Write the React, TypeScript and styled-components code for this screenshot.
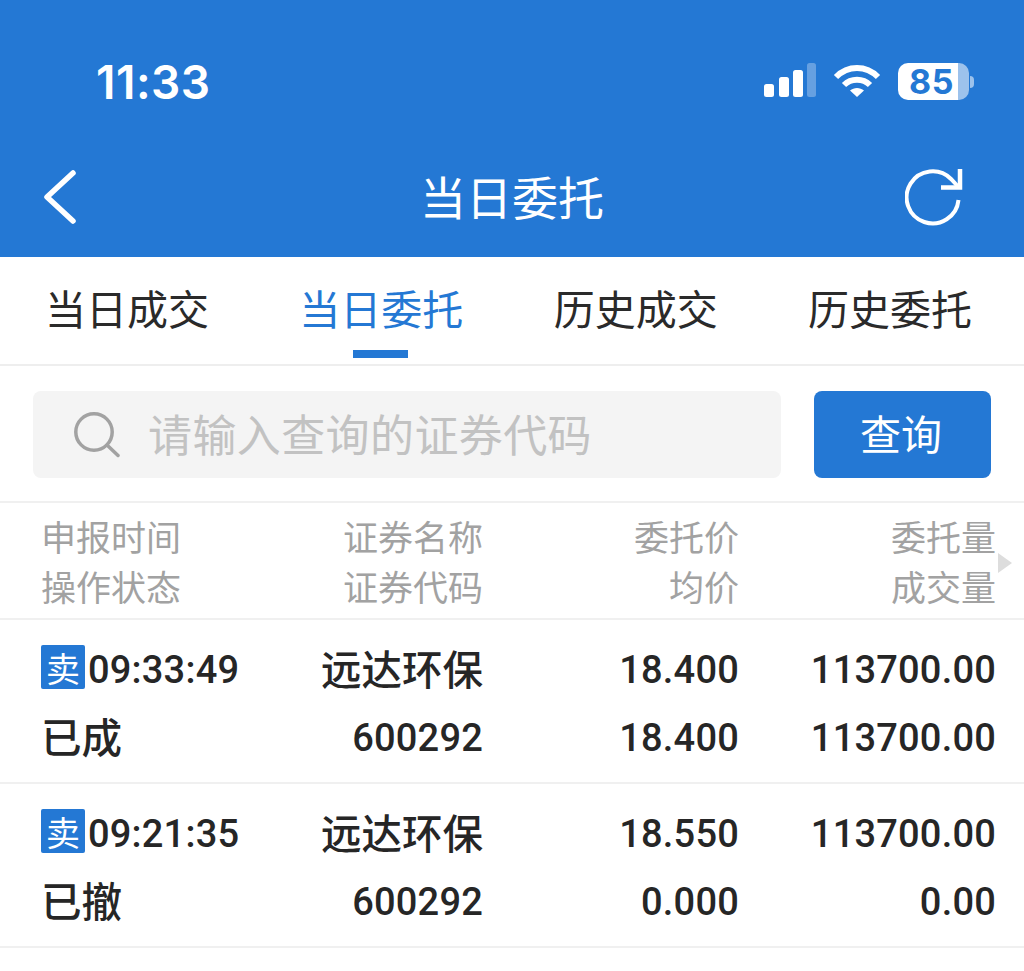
import React from "react";
import styled, { createGlobalStyle } from "styled-components";

const Global = createGlobalStyle`
  html, body { margin: 0; padding: 0; background: #fff; }
  * { box-sizing: border-box; }
  body { font-family: "Noto Sans CJK SC", "Noto Sans", sans-serif; }
`;
const BLUE = "#2478d4";
const NUM = `"Roboto", "Noto Sans CJK SC", sans-serif`;

const Page = styled.div`width: 1024px; height: 971px; overflow: hidden; background: #fff;`;
const Top = styled.header`height: 257px; background: ${BLUE}; color: #fff; display: flex; flex-direction: column;`;
const StatusBar = styled.div`height: 145px; display: flex; align-items: center; justify-content: space-between; padding: 18px 50px 0 96px;`;
const Clock = styled.div`font: 600 46px/1 "Inter", "Roboto", sans-serif; letter-spacing: 0.5px;`;
const NavBar = styled.div`flex: 1; display: flex; align-items: center; justify-content: space-between; padding: 0 61px 8px 43px; position: relative;`;
const NavTitle = styled.div`position: absolute; left: 0; right: 0; top: 18px; text-align: center; font-size: 46px; line-height: 64px; font-weight: 400;`;

const Tabs = styled.nav`height: 109px; border-bottom: 2px solid #eeeeee; display: flex; padding: 0 30px 0 23px; justify-content: space-between;`;
const Tab = styled.div<{ $active?: boolean }>`
  width: 208px; text-align: center; padding-top: 22px; position: relative; font-size: 41px; line-height: 56px;
  color: ${p => (p.$active ? BLUE : "#2a2a2a")};
  ${p => p.$active ? `&::after { content: ""; position: absolute; left: 76px; bottom: 6px; width: 55px; height: 8px; background: ${BLUE}; }` : ""}
`;

const SearchRow = styled.div`height: 137px; border-bottom: 2px solid #f0f0f0; display: flex; padding: 25px 33px 0; gap: 33px;`;
const SearchBox = styled.div`width: 748px; height: 87px; background: #f4f4f4; border-radius: 8px; display: flex; align-items: center; padding: 0 0 0 41px; gap: 28px;`;
const Placeholder = styled.div`font-size: 44px; letter-spacing: 0.4px; color: #c2c2c2; line-height: 56px; padding-bottom: 4px;`;
const QueryBtn = styled.div`width: 177px; height: 87px; padding: 0 3px 5px 0; background: ${BLUE}; border-radius: 8px; color: #fff; font-size: 41px; display: flex; align-items: center; justify-content: center;`;

const Row = styled.div<{ $head?: boolean }>`
  height: ${p => (p.$head ? 117 : 164)}px; border-bottom: 2px solid #f0f0f0; position: relative;
  display: grid; grid-template-columns: 292px 150px 256px 257px; padding: 0 28px 0 41px;
  grid-template-rows: ${p => (p.$head ? "50px 50px" : "68px 68px")}; align-content: center;
`;
const Cell = styled.div<{ $head?: boolean; $left?: boolean }>`
  display: flex; align-items: center; justify-content: ${p => (p.$left ? "flex-start" : "flex-end")}; white-space: nowrap;
  font-size: ${p => (p.$head ? 35 : 40.5)}px; color: ${p => (p.$head ? "#a2a2a2" : "#262626")}; font-weight: ${p => (p.$head ? 400 : 500)};
`;
const Num = styled.span`font-family: ${NUM}; font-weight: 500; font-size: 38px; letter-spacing: 0.2px; padding-top: 5px;`;
const Badge = styled.span`width: 44px; height: 44px; margin-right: 3px; background: ${BLUE}; border-radius: 2px; color: #fff; font-size: 34px; font-weight: 400; display: flex; align-items: center; justify-content: center;`;
const More = styled.div`position: absolute; right: 12px; top: 50px; width: 0; height: 0; border-left: 14px solid #dddddd; border-top: 10px solid transparent; border-bottom: 10px solid transparent;`;

const Signal = () => (
  <svg width="52" height="38" viewBox="0 0 52 38" fill="#fff">
    <rect x="0" y="21" width="10" height="13" rx="2.5" />
    <rect x="15" y="14" width="10" height="20" rx="2.5" />
    <rect x="29" y="7" width="10" height="27" rx="2.5" />
    <rect x="43" y="0" width="9" height="34" rx="2.5" fillOpacity="0.3" />
  </svg>
);
const Wifi = () => (
  <svg width="48" height="36" viewBox="0 0 48 36" fill="none" stroke="#fff" strokeWidth="6">
    <path d="M3 13 C15 1 33 1 45 13" />
    <path d="M11 21 C18 14 30 14 37 21" />
    <path d="M24 33 L17 26.5 C21 23 27 23 31 26.5 Z" fill="#fff" stroke="none" />
  </svg>
);
const BatteryWrap = styled.div`display: flex; align-items: center; width: 76px; height: 37px; position: relative;`;
const BatteryBody = styled.div`
  width: 71px; height: 37px; border-radius: 10px; color: ${BLUE};
  background: linear-gradient(90deg, #fff 0 85%, #9cc2ec 85% 100%);
  font: 700 34px/37px "Inter", "Roboto", sans-serif; text-align: left; padding-left: 11px; letter-spacing: 0.5px;
`;
const BatteryTip = styled.div`width: 4px; height: 12px; margin-left: 1px; background: #9cc2ec; border-radius: 0 4px 4px 0;`;
const StatusIcons = styled.div`display: flex; align-items: center; gap: 17px;`;
const Back = () => (
  <svg width="36" height="56" viewBox="0 0 36 56" fill="none" stroke="#fff" strokeWidth="5.5" strokeLinecap="round" strokeLinejoin="round">
    <path d="M30 4 L4 28 L30 52" />
  </svg>
);
const Refresh = () => (
  <svg width="58" height="58" viewBox="0 0 58 58" fill="none" stroke="#fff" strokeWidth="4">
    <path d="M53.5 32 A26 26 0 1 1 46 11 L53.5 19" />
    <path d="M36 19.5 H55 V1" strokeWidth="4.5" />
  </svg>
);
const SearchIcon = () => (
  <svg width="46" height="46" viewBox="0 0 46 46" fill="none" stroke="#a2a2a2" strokeWidth="3.5" strokeLinecap="round">
    <circle cx="20" cy="20" r="18.2" />
    <path d="M33 33 L44 43.5" />
  </svg>
);

type Order = { side: string; time: string; name: string; price: string; qty: string; status: string; code: string; avg: string; done: string };
const orders: Order[] = [
  { side: "卖", time: "09:33:49", name: "远达环保", price: "18.400", qty: "113700.00", status: "已成", code: "600292", avg: "18.400", done: "113700.00" },
  { side: "卖", time: "09:21:35", name: "远达环保", price: "18.550", qty: "113700.00", status: "已撤", code: "600292", avg: "0.000", done: "0.00" },
];

export default function App() {
  return (
    <Page>
      <Global />
      <Top>
        <StatusBar>
          <Clock>11:33</Clock>
          <StatusIcons>
            <Signal />
            <Wifi />
            <BatteryWrap><BatteryBody>85</BatteryBody><BatteryTip /></BatteryWrap>
          </StatusIcons>
        </StatusBar>
        <NavBar>
          <Back />
          <NavTitle>当日委托</NavTitle>
          <Refresh />
        </NavBar>
      </Top>
      <Tabs>
        <Tab>当日成交</Tab>
        <Tab $active>当日委托</Tab>
        <Tab>历史成交</Tab>
        <Tab>历史委托</Tab>
      </Tabs>
      <SearchRow>
        <SearchBox><SearchIcon /><Placeholder>请输入查询的证券代码</Placeholder></SearchBox>
        <QueryBtn>查询</QueryBtn>
      </SearchRow>
      <Row $head>
        <Cell $head $left>申报时间</Cell><Cell $head>证券名称</Cell><Cell $head>委托价</Cell><Cell $head>委托量</Cell>
        <Cell $head $left>操作状态</Cell><Cell $head>证券代码</Cell><Cell $head>均价</Cell><Cell $head>成交量</Cell>
        <More />
      </Row>
      {orders.map(o => (
        <Row key={o.time}>
          <Cell $left><Badge>{o.side}</Badge><Num>{o.time}</Num></Cell>
          <Cell>{o.name}</Cell>
          <Cell><Num>{o.price}</Num></Cell>
          <Cell><Num>{o.qty}</Num></Cell>
          <Cell $left>{o.status}</Cell>
          <Cell><Num>{o.code}</Num></Cell>
          <Cell><Num>{o.avg}</Num></Cell>
          <Cell><Num>{o.done}</Num></Cell>
        </Row>
      ))}
    </Page>
  );
}
